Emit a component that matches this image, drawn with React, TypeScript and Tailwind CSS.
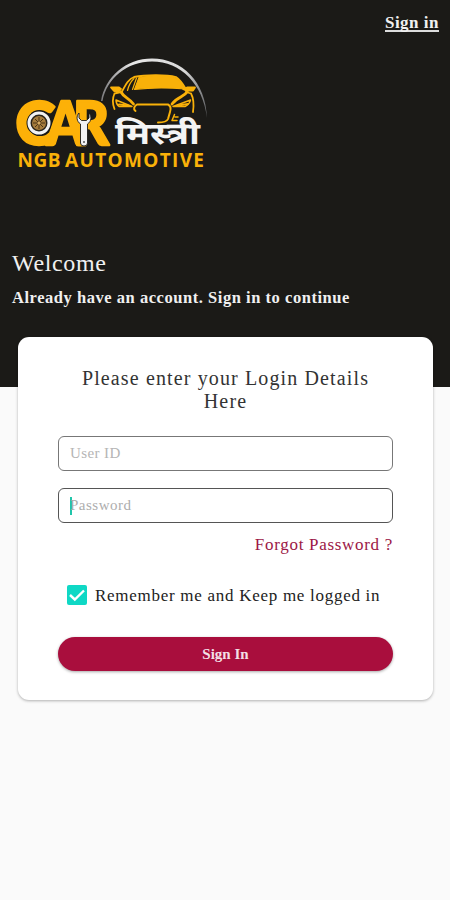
import { useState } from 'react'

function Logo() {
  return (
    <svg className="block w-[200px] h-[124px]" viewBox="12 52 200 124" fill="none">
      <defs>
        <linearGradient id="arc" x1="100" y1="0" x2="207" y2="0" gradientUnits="userSpaceOnUse">
          <stop offset="0" stopColor="#77777a" />
          <stop offset="0.3" stopColor="#e8e8e8" />
          <stop offset="0.8" stopColor="#d8d8d8" />
          <stop offset="1" stopColor="#66676a" />
        </linearGradient>
      </defs>

      {/* Arc over the car */}
      <path
        d="M101 101C105 77 126 58.500 152 58.500C182 58.500 206 82 207 118C203 84 181 61.500 152 61.500C127 61.500 107 78 102.500 101Z"
        fill="url(#arc)"
      />

      {/* Car front */}
      <g stroke="#f9b109" strokeLinecap="round" strokeLinejoin="round">
        <path d="M139 77.500C151 75.500 166 75.500 175 77.500C180 81 183 85 185 89C169 87.500 150 87.500 134.500 89.500Z" fill="#f9b109" strokeWidth="1.200" />
        <path d="M122 91.500C126 84 129 78.500 134 77C145 74.800 166 74.500 176 77C181 80 184 86 187.500 91.500" strokeWidth="1.800" />
        <path d="M134 78.500C130.500 82 128.500 86 127.500 90.500M136.500 78L132.500 89.500" strokeWidth="1.200" />
        <path d="M111 87.500H119L121 89L119 91H114ZM183 89L187 87.500H195L193 90.500H186Z" fill="#f9b109" strokeWidth="1.800" />
        <path d="M114.500 93.500C112.500 98 112.500 104 114.500 109M191 93.500C194 99 194 105 193 112M114.500 93.500L121 92M191 93.500L186 92" strokeWidth="1.800" />
        <path d="M121 92C123.500 97 129 98 133.500 104M187 92C184 97 177 97 172 104" strokeWidth="2.800" />
        <path d="M116 100L132 106.500H119C117 105 116 103 116 100ZM190.500 100L173 106.500H185C188 105 190 103 190.500 100Z" strokeWidth="1.500" />
        <path d="M119 104.500L128 105.500M188 104L178 105.500" strokeWidth="2" />
        <path d="M135.500 111C133 109 134 106.500 137 104.500H168C171 106 171 109 170 112L168 119C167 121.500 165 122.500 158 122.500" strokeWidth="2" />
        <path d="M174.500 114.500L172 120.500H177M175 117H178" strokeWidth="1.500" />
      </g>

      <text
        y="144.500" fill="#fdb108" stroke="#fdb108" strokeWidth="2.500" strokeLinejoin="round"
        className="font-['Lato'] font-black text-[60px]"
      >
        <tspan x="15.500" textLength="40" lengthAdjust="spacingAndGlyphs">C</tspan>
        <tspan x="46.500" textLength="38" lengthAdjust="spacingAndGlyphs">A</tspan>
        <tspan x="73" textLength="36" lengthAdjust="spacingAndGlyphs">R</tspan>
      </text>

      {/* Wheel */}
      <circle cx="39" cy="123" r="12.500" fill="#1b1a17" />
      <circle cx="39" cy="123" r="10" fill="#2a241a" stroke="#f2f2f2" strokeWidth="3" />
      <circle cx="39" cy="123" r="7" fill="#a67c3c" />
      <path d="M39 117V129M33 123H45M35 119L43 127M43 119L35 127" stroke="#4a3517" strokeWidth="1" />
      <circle cx="39" cy="123" r="1.500" fill="#d5aa62" />

      {/* Wrench */}
      <path
        d="M79 113C76 116 76.500 121.500 80.500 124V143Q80.500 146 84 146Q87.500 146 87.500 143V124C91.500 121.500 92 116 89 113V118L86.500 120.500H81.500L79 118Z"
        fill="#f1f1f1" stroke="#1b1a17" strokeWidth="0.900"
      />
      <circle cx="84" cy="142" r="1" fill="#555" />

      <text
        x="115" y="144" fill="#f4f4f4"
        className="font-['Noto_Sans_Devanagari','Noto_Sans',sans-serif] font-bold text-[31px]"
        textLength="85" lengthAdjust="spacingAndGlyphs"
      >मिस्त्री</text>
      <text
        y="167" fill="#f9b109"
        className="font-['Open_Sans'] font-bold text-[19px]"
      >
        <tspan x="17.500" textLength="43" lengthAdjust="spacing">NGB</tspan>
        <tspan x="65" textLength="139" lengthAdjust="spacing">AUTOMOTIVE</tspan>
      </text>
    </svg>
  )
}

export default function App() {
  const [userId, setUserId] = useState('')
  const [password, setPassword] = useState('')
  const [remember, setRemember] = useState(true)

  return (
    <div className="min-h-screen bg-[#fafafa] font-['Liberation_Serif',serif] text-[#222]">
      {/* Header */}
      <header className="flex h-[387px] flex-col bg-[#1b1a17] text-[#f0f0f0]">
        <div className="flex h-[52px] justify-end pr-[11px] pt-[13px]">
          <a href="#" className="h-[19px] border-b-2 border-[#ddd] text-[17px] leading-[20px] font-bold tracking-[0.5px]">Sign in</a>
        </div>
        <div className="pl-3">
          <Logo />
          <h1 className="mt-[73px] text-[24px] leading-7 tracking-[0.65px]">Welcome</h1>
          <p className="mt-[11px] text-[16.500px] leading-5 font-bold tracking-[0.54px] whitespace-nowrap">
            Already have an account. Sign in to continue
          </p>
        </div>
      </header>

      {/* Login card */}
      <form
        onSubmit={e => e.preventDefault()}
        className="relative -mt-[50px] mx-[18px] mr-[17px] h-[363px] rounded-[11px] bg-white px-10 pt-[30px] shadow-[0_1px_3px_rgba(0,0,0,0.3)]"
      >
        <h2 className="text-center text-[20px] leading-[23px] tracking-[1.13px] whitespace-nowrap text-[#333]">
          Please enter your Login Details<br />Here
        </h2>
        <input
          value={userId}
          onChange={e => setUserId(e.target.value)}
          placeholder="User ID"
          className="mt-[23px] block h-[35px] w-[335px] rounded-[6px] border border-[#777] px-[11px] text-[15px] tracking-[0.4px] outline-none placeholder:text-[#b5b5b5]"
        />
        <div className="mt-[17px] flex h-[35px] w-[335px] items-center rounded-[6px] border border-[#555] pl-[11px]">
          <span className="h-[18px] w-[2px] bg-[#20c5aa]" />
          <input
            type="password"
            value={password}
            onChange={e => setPassword(e.target.value)}
            placeholder="Password"
            className="-ml-[2px] flex-1 text-[15px] tracking-[0.5px] outline-none placeholder:text-[#adadad]"
          />
        </div>
        <a href="#" className="mt-[12px] block text-right text-[17px] leading-5 tracking-[0.7px] text-[#9c1746]">Forgot Password ?</a>

        <label className="mt-[29px] ml-[9px] flex h-[22px] items-center">
          <input type="checkbox" checked={remember} onChange={e => setRemember(e.target.checked)} className="sr-only" />
          <span className="flex size-[20px] shrink-0 items-center justify-center rounded-[2px] bg-[#0fd8c5]">
            {remember && (
              <svg className="size-[20px]" viewBox="0 0 20 20" fill="none" stroke="#fff" strokeWidth="2.400">
                <path d="M3 10L7.800 14.500L17 5.500" />
              </svg>
            )}
          </span>
          <span className="mt-px ml-2 text-[17px] leading-5 tracking-[0.72px] whitespace-nowrap">Remember me and Keep me logged in</span>
        </label>

        <button
          type="submit"
          className="mt-[31px] h-[34px] w-[335px] rounded-full bg-[#a90e3d] text-[15px] font-bold text-[#f3dfe6] shadow-[0_1px_3px_rgba(0,0,0,0.35)]"
        >
          Sign In
        </button>
      </form>
    </div>
  )
}
